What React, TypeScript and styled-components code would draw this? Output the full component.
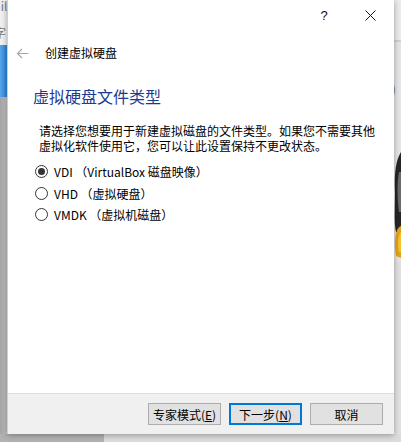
import * as React from 'react';
import styled, { createGlobalStyle } from 'styled-components';

const GlobalStyle = createGlobalStyle`
	html, body {
		margin: 0;
		padding: 0;
	}
	body {
		width: 401px;
		height: 442px;
		overflow: hidden;
		background: #c9c9c9;
		font-family: "Noto Sans CJK SC", "Liberation Sans", sans-serif;
		font-size: 12px;
		color: #000;
	}
	* {
		box-sizing: border-box;
	}
`;

const formats = [
	{ id: 'vdi', label: 'VDI （VirtualBox 磁盘映像）', checked: true },
	{ id: 'vhd', label: 'VHD （虚拟硬盘）', checked: false },
	{ id: 'vmdk', label: 'VMDK （虚拟机磁盘）', checked: false },
];

const App = () => {
	const [selected, setSelected] = React.useState('vdi');

	return (
		<>
			<GlobalStyle />
			<Desktop>
				<Stage>
					<LeftEdge>
						<EdgeBand $h={45} $bg="#f1f1f1">
							<EdgeText $top={-3}>ail</EdgeText>
							<EdgeText $top={24}>字</EdgeText>
						</EdgeBand>
						<EdgeBand $h={52} $bg="linear-gradient(90deg, #5aa6ec, #2b83dc)" />
						<EdgeBand $bg="linear-gradient(90deg, #a4a4a4, #c4c4c4)" />
					</LeftEdge>

					<Dialog>
						<TitleBar>
							<TitleButton>?</TitleButton>
							<TitleButton>
								<svg width="11" height="11" viewBox="0 0 11 11">
									<path d="M0.5 0.5 L10.5 10.5 M10.5 0.5 L0.5 10.5" stroke="#111" strokeWidth="1" />
								</svg>
							</TitleButton>
						</TitleBar>

						<WizardHeader>
							<BackArrow width="13" height="11" viewBox="0 0 13 11">
								<path d="M12.5 5.5 H1.5 M6 1 L1.5 5.5 L6 10" stroke="#a8a8a8" strokeWidth="1.2" fill="none" />
							</BackArrow>
							<WizardTitle>创建虚拟硬盘</WizardTitle>
						</WizardHeader>

						<Content>
							<Heading>虚拟硬盘文件类型</Heading>
							<Description>
								请选择您想要用于新建虚拟磁盘的文件类型。如果您不需要其他
								<br />
								虚拟化软件使用它，您可以让此设置保持不更改状态。
							</Description>
							<RadioList>
								{formats.map((f) => (
									<RadioRow key={f.id} onClick={() => setSelected(f.id)}>
										<RadioMark $checked={selected === f.id} />
										<span>{f.label}</span>
									</RadioRow>
								))}
							</RadioList>
						</Content>

						<Footer>
							<DialogButton type="button">
								专家模式(<u>E</u>)
							</DialogButton>
							<DialogButton type="button" $focused>
								下一步(<u>N</u>)
							</DialogButton>
							<DialogButton type="button">取消</DialogButton>
						</Footer>
					</Dialog>

					<RightEdge>
						<EdgeBand $h={40} $bg="#ececec" />
						<EdgeBand $h={2} $bg="#d2d2d2" />
						<EdgeBand $h={110} $bg="#e6e6e6">
							<EdgeText $top={38} $left={-2}>)</EdgeText>
						</EdgeBand>
						<EdgeBand $h={110} $bg="#e6e6e6">
							<svg width="7" height="110" viewBox="0 0 7 110">
								<path d="M7 0 C2 8 0 20 1 40 C1 60 0 70 2 80 L7 80 Z" fill="#262626" />
								<path d="M5 20 C3 30 3 45 5 60 L7 60 L7 20 Z" fill="#6b6b6b" />
								<path d="M7 74 C1 76 0 90 2 104 L7 106 Z" fill="#e5a31c" />
								<path d="M7 80 C4 84 3 92 5 100 L7 100 Z" fill="#f4c430" />
							</svg>
						</EdgeBand>
						<EdgeBand $bg="#e2e2e2" />
					</RightEdge>
				</Stage>

				<BottomStrip>
					<BottomPart $w={104} $bg="#b2b2b2" />
					<BottomPart $bg="#dcdcdc" />
				</BottomStrip>
			</Desktop>
		</>
	);
};

export default App;

const Desktop = styled.div`
	width: 401px;
	height: 442px;
	display: flex;
	flex-direction: column;
	overflow: hidden;
`;

const Stage = styled.div`
	display: flex;
	height: 434px;
`;

const LeftEdge = styled.div`
	width: 7px;
	flex-shrink: 0;
	display: flex;
	flex-direction: column;
	overflow: hidden;
`;

const RightEdge = styled(LeftEdge)``;

const EdgeBand = styled.div<{ $h?: number; $bg: string }>`
	position: relative;
	overflow: hidden;
	flex: ${(p) => (p.$h ? `0 0 ${p.$h}px` : '1')};
	background: ${(p) => p.$bg};
`;

const EdgeText = styled.span<{ $top: number; $left?: number }>`
	position: absolute;
	top: ${(p) => p.$top}px;
	left: ${(p) => p.$left ?? -6}px;
	font-size: 12px;
	color: #7a7a7a;
	white-space: nowrap;
`;

const Dialog = styled.div`
	position: relative;
	z-index: 1;
	width: 387px;
	flex-shrink: 0;
	height: 434px;
	display: flex;
	flex-direction: column;
	background: #fff;
	border-left: 1px solid #cfcfcf;
	box-shadow: 0 1px 6px rgba(0, 0, 0, 0.35);
`;

const TitleBar = styled.div`
	height: 31px;
	display: flex;
	justify-content: flex-end;
	padding-right: 1px;
`;

const TitleButton = styled.div`
	width: 46px;
	height: 31px;
	display: flex;
	align-items: center;
	justify-content: center;
	font-family: "Liberation Sans", sans-serif;
	font-size: 13px;
	color: #111;
`;

const WizardHeader = styled.div`
	height: 44px;
	display: flex;
	align-items: center;
	padding-left: 8px;
	gap: 16px;
`;

const BackArrow = styled.svg`
	flex-shrink: 0;
`;

const WizardTitle = styled.span`
	font-size: 12px;
	line-height: 16px;
`;

const Content = styled.div`
	flex: 1;
	display: flex;
	flex-direction: column;
`;

const Heading = styled.h1`
	margin: 10px 0 0 25px;
	font-size: 16px;
	line-height: 22px;
	font-weight: 400;
	color: #1d3a92;
`;

const Description = styled.p`
	margin: 16px 0 0 31px;
	font-size: 12px;
	line-height: 15px;
`;

const RadioList = styled.div`
	margin: 8px 0 0 27px;
	display: flex;
	flex-direction: column;
`;

const RadioRow = styled.label`
	height: 21.5px;
	display: flex;
	align-items: center;
	gap: 6px;
	font-size: 12px;
	cursor: default;
`;

const RadioMark = styled.span<{ $checked: boolean }>`
	width: 13px;
	height: 13px;
	flex-shrink: 0;
	border: 1px solid #333;
	border-radius: 50%;
	background: #fff;
	display: flex;
	align-items: center;
	justify-content: center;
	&::after {
		content: '';
		width: 7px;
		height: 7px;
		border-radius: 50%;
		background: ${(p) => (p.$checked ? '#333' : 'transparent')};
	}
`;

const Footer = styled.div`
	height: 41px;
	display: flex;
	justify-content: flex-end;
	align-items: flex-start;
	gap: 8px;
	padding: 9px 11px 0 0;
	background: #f0f0f0;
	border-top: 1px solid #dedede;
`;

const DialogButton = styled.button<{ $focused?: boolean }>`
	width: 73px;
	height: 22px;
	padding: 0;
	font-family: "Noto Sans CJK SC", "Liberation Sans", sans-serif;
	font-size: 12px;
	color: #000;
	background: #e1e1e1;
	border: 1px solid ${(p) => (p.$focused ? '#0078d7' : '#adadad')};
	box-shadow: ${(p) => (p.$focused ? 'inset 0 0 0 1px #0078d7' : 'none')};
	u {
		text-decoration: underline;
	}
`;

const BottomStrip = styled.div`
	flex: 1;
	display: flex;
`;

const BottomPart = styled.div<{ $w?: number; $bg: string }>`
	flex: ${(p) => (p.$w ? `0 0 ${p.$w}px` : '1')};
	background: ${(p) => p.$bg};
`;
